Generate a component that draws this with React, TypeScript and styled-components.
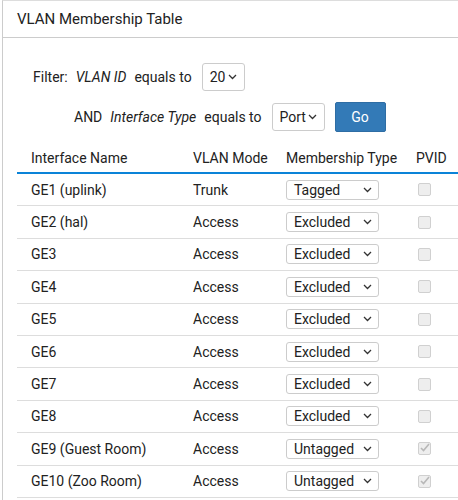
import React from 'react'
import styled, { createGlobalStyle } from 'styled-components'

const Global = createGlobalStyle`
  body { margin: 0; background: #fff; font-family: Roboto, "Liberation Sans", Arial, sans-serif; font-size: 14px; color: #222; }
`

const Panel = styled.div`
  margin-left: 2px;
  border-left: 1px solid #ccc;
  border-top: 1px solid #ddd;
  height: 500px;
  overflow: hidden;
`

const Title = styled.div`
  height: 36px;
  padding-left: 14px;
  display: flex;
  align-items: center;
  font-size: 15px;
  border-bottom: 1px solid #ccc;
`

const Body = styled.div`
  padding: 25px 0 0 14px;
`

const FilterRow = styled.div<{ indent: number }>`
  display: flex;
  align-items: center;
  gap: 8px;
  padding-left: ${p => p.indent}px;
  margin-bottom: 11px;
`

const Em = styled.i``

const Select = styled.div<{ w: number }>`
  width: ${p => p.w}px;
  height: 28px;
  box-sizing: border-box;
  border: 1px solid #ccc;
  border-radius: 3px;
  display: flex;
  align-items: center;
  justify-content: space-between;
  padding: 0 7px 0 7px;
  font-size: 14px;
  margin-left: 2px;
`

const SmallSelect = styled(Select)`
  height: 20px;
  padding: 0 6px 0 7px;
  margin-left: 0;
`

const Go = styled.button`
  width: 51px;
  height: 30px;
  margin-left: 2px;
  background: #337ab7;
  border: 1px solid #2e6da4;
  border-radius: 2px;
  color: #fff;
  font: inherit;
  font-size: 14px;
`

const Table = styled.div`
  margin-top: 5px;
`

const Row = styled.div<{ head?: boolean }>`
  display: grid;
  grid-template-columns: 162px 93px 130px 1fr;
  align-items: center;
  height: ${p => (p.head ? 31 : 32.4)}px;
  box-sizing: border-box;
  padding-left: 14px;
  border-bottom: ${p => (p.head ? '2px solid #0a83d8' : '1px solid #ddd')};
`

const Check = styled.div`
  width: 13px;
  height: 13px;
  box-sizing: border-box;
  border: 1px solid #d0d0d0;
  border-radius: 2px;
  background: #eee;
  margin-left: 2px;
  position: relative;
`

const Chevron = () => (
  <svg width="9" height="6" viewBox="0 0 9 6"><path d="M1 1l3.5 3.5L8 1" fill="none" stroke="#333" strokeWidth="1.3" /></svg>
)

const rows: [string, string, string, boolean][] = [
  ['GE1 (uplink)', 'Trunk', 'Tagged', false],
  ['GE2 (hal)', 'Access', 'Excluded', false],
  ['GE3', 'Access', 'Excluded', false],
  ['GE4', 'Access', 'Excluded', false],
  ['GE5', 'Access', 'Excluded', false],
  ['GE6', 'Access', 'Excluded', false],
  ['GE7', 'Access', 'Excluded', false],
  ['GE8', 'Access', 'Excluded', false],
  ['GE9 (Guest Room)', 'Access', 'Untagged', true],
  ['GE10 (Zoo Room)', 'Access', 'Untagged', true],
]

export default function App() {
  return (
    <>
      <Global />
      <Panel>
        <Title>VLAN Membership Table</Title>
        <Body>
          <FilterRow indent={16}>
            <span>Filter:</span>
            <Em>VLAN ID</Em>
            <span>equals to</span>
            <Select w={43}>20 <Chevron /></Select>
          </FilterRow>
          <FilterRow indent={57}>
            <span>AND</span>
            <Em>Interface Type</Em>
            <span>equals to</span>
            <Select w={53}>Port <Chevron /></Select>
            <Go>Go</Go>
          </FilterRow>
          <Table>
            <Row head>
              <span>Interface Name</span>
              <span>VLAN Mode</span>
              <span>Membership Type</span>
              <span>PVID</span>
            </Row>
            {rows.map(([n, m, t, c]) => (
              <Row key={n}>
                <span>{n}</span>
                <span>{m}</span>
                <SmallSelect w={93}>{t} <Chevron /></SmallSelect>
                <Check>
                  {c && (
                    <svg width="13" height="13" viewBox="0 0 13 13" style={{ position: 'absolute', left: -1, top: -2 }}>
                      <path d="M3 7l2.5 2.5L11 3" fill="none" stroke="#b8b8b8" strokeWidth="1.6" />
                    </svg>
                  )}
                </Check>
              </Row>
            ))}
          </Table>
        </Body>
      </Panel>
    </>
  )
}
